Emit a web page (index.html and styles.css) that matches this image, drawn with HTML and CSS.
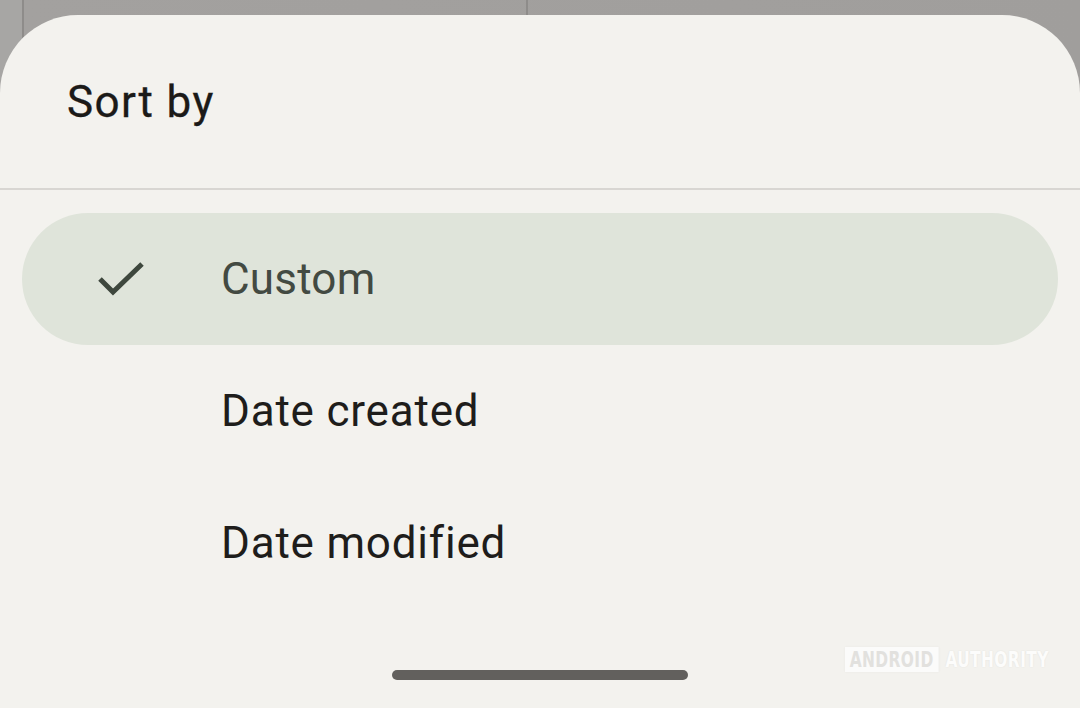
FILE: index.html
```html
<!DOCTYPE html>
<html>
<head>
<meta charset="utf-8">
<link rel="stylesheet" href="styles.css">
</head>
<body>
<div class="sheet">
  <div class="header"><h1 class="title">Sort by</h1></div>
  <div class="divider"></div>
  <ul class="options">
    <li class="option selected">
      <span class="check">
        <svg width="50" height="38" viewBox="0 0 50 38"><path d="M3 18 L16 31 L45 3" fill="none" stroke="#3e473d" stroke-width="5"/></svg>
      </span>
      <span class="label">Custom</span>
    </li>
    <li class="option"><span class="check"></span><span class="label">Date created</span></li>
    <li class="option"><span class="check"></span><span class="label">Date modified</span></li>
  </ul>
  <div class="footer">
    <div class="home-bar"></div>
    <div class="watermark"><span class="wm-box">ANDROID</span><span class="wm-text">AUTHORITY</span></div>
  </div>
</div>
</body>
</html>
```
FILE: styles.css
```css
html, body {
  margin: 0;
  padding: 0;
  height: 100%;
  overflow: hidden;
}
body {
  background:
    linear-gradient(to right, transparent 22px, #8e8c8a 22px, #8e8c8a 24px, transparent 24px, transparent 526px, #8e8c8a 526px, #8e8c8a 528px, transparent 528px),
    linear-gradient(to right, #a7a6a4 0, #a7a6a4 22px, #a3a19f 24px, #a09e9c 100%);
  font-family: Roboto, "Noto Sans", sans-serif;
  padding-top: 15px;
  box-sizing: border-box;
}
.sheet {
  background: #f3f2ee;
  border-radius: 78px 78px 0 0;
  height: 693px;
  display: flex;
  flex-direction: column;
}
.header {
  height: 173px;
  display: flex;
  align-items: center;
  padding-left: 67px;
  box-sizing: border-box;
}
.title {
  margin: 0;
  font-weight: 400;
  font-size: 44px;
  color: #1b1a18;
  letter-spacing: 1.4px;
  -webkit-text-stroke: 0.3px #1b1a18;
}
.divider {
  height: 2px;
  background: #d8d6d2;
}
.options {
  list-style: none;
  margin: 23px 22px 0;
  padding: 0;
}
.option {
  height: 132px;
  display: flex;
  align-items: center;
  border-radius: 66px;
  color: #1e1d1b;
  font-size: 44px;
  letter-spacing: 0.8px;
}
.option.selected {
  background: #dfe4da;
  color: #434a42;
}
.option.selected .label { letter-spacing: 0.2px; }
.check {
  width: 199px;
  padding-left: 75px;
  box-sizing: border-box;
  display: flex;
  align-items: center;
}
.check svg { display: block; margin-top: 2px; }
.label { line-height: 1; }
.footer {
  flex: 1;
  position: relative;
  display: flex;
  justify-content: center;
  align-items: flex-end;
  padding-bottom: 28px;
}
.home-bar {
  width: 296px;
  height: 10px;
  border-radius: 5px;
  background: #62605d;
}
.watermark {
  position: absolute;
  left: 845px;
  top: 38px;
  display: flex;
  align-items: center;
  gap: 9px;
  font-family: "DejaVu Sans Condensed", sans-serif;
  font-weight: bold;
  font-size: 22px;
  letter-spacing: 0.5px;
  transform: scaleX(0.78);
  transform-origin: left center;
}
.wm-box {
  background: #fbfbfa;
  color: #e2e1de;
  padding: 0 6px;
  height: 25px;
  line-height: 25px;
  box-shadow: 0 0 3px rgba(0,0,0,0.04);
}
.wm-text {
  color: #fcfcfb;
  text-shadow: 0 0 2px rgba(0,0,0,0.08);
}
```
